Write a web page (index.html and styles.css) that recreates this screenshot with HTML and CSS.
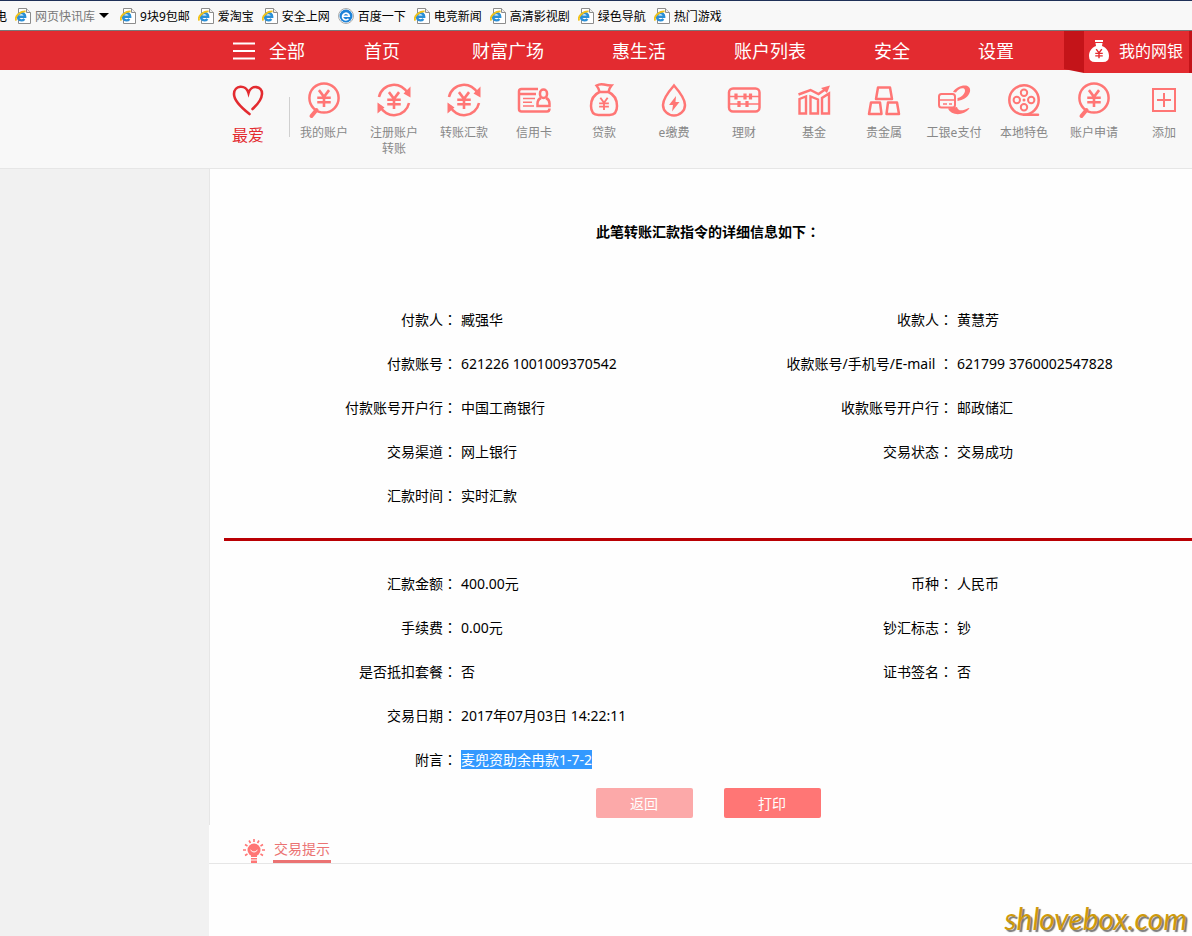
FILE: index.html
```html
<!DOCTYPE html>
<html lang="zh-CN">
  <head>
    <meta charset="UTF-8" />
    <meta name="viewport" content="width=device-width, initial-scale=1.0" />
    <title>转账汇款明细</title>
    <link rel="stylesheet" href="styles.css">
  </head>

  <body>
    <!-- shared icons -->
    <svg class="sprite" aria-hidden="true">
      <symbol id="ie-page" viewBox="0 0 16 16">
        <path d="M3.5.5h8l4 4v11h-12z" fill="#fff" stroke="#8c8c8c" />
        <path d="M11.5.5v4h4" fill="#eee" stroke="#8c8c8c" />
        <path d="M3 8.8h7.2A3.7 3.7 0 1 0 9.4 11" fill="none" stroke="#2b8fd6" stroke-width="2.4" />
        <path d="M1.4 12.6C-1 9 5 3 10.6 3.4" fill="none" stroke="#f2c21a" stroke-width="1.8" />
      </symbol>
      <symbol id="yen" viewBox="0 0 12 16">
        <path d="M1.5 1 6 7l4.5-6M6 7v9M0 7.8h12M0 11.8h12" fill="none" stroke="currentColor" stroke-width="2.3" />
      </symbol>
      <symbol id="search-yen" viewBox="0 0 40 40">
        <circle cx="20" cy="18" r="14.6" />
        <path d="M12.5 30 7.5 36" stroke-width="4" stroke-linecap="round" />
        <use href="#yen" x="13" y="9" width="14" height="18" />
      </symbol>
      <symbol id="transfer" viewBox="0 0 40 40">
        <path d="M5 17a15.3 15.3 0 0 1 29-3M35 23a15.3 15.3 0 0 1-29 3" />
        <path d="M36.5 6.5v11l-7-4zM3.5 33.5v-11l7 5z" fill="currentColor" stroke="none" />
        <use href="#yen" x="13" y="11" width="14" height="18" />
      </symbol>
      <symbol id="card" viewBox="0 0 40 40">
        <path d="M24 9H7.5Q5 9 5 11.5V29q0 2.5 2.5 2.500H33q2.500 0 2.500-3M5 14h17" />
        <path d="M9 18.500h12M9 22.200h9M9 26h11" stroke-width="1.6" />
        <rect x="26" y="9.5" width="7" height="8.5" rx="3.5" />
        <path d="M27 18q-3.500 1.500-3.500 5.500v2.500h12v-2.500q0-4-3.500-5.500" />
      </symbol>
      <symbol id="loan" viewBox="0 0 40 40">
        <path d="M15.500 12q-.5-3.500-3-6.500 3.500-2 7.500-1t7.500 1q-2.500 3-3 6.500zM15.500 12C9 15 7 21 7 26q0 9 7.500 9h11q7.500 0 7.500-9c0-5-2-11-8.500-14" />
        <use href="#yen" x="15" y="17" width="10" height="13" />
      </symbol>
      <symbol id="drop" viewBox="0 0 40 40">
        <path d="M20 5.500Q9 18 9 25a11 10.500 0 0 0 22 0Q31 18 20 5.500z" />
        <path d="m22 16-7 9h4l-1 6.500 7.500-9.500h-4z" fill="currentColor" stroke="none" />
      </symbol>
      <symbol id="abacus" viewBox="0 0 40 40">
        <rect x="5" y="8.5" width="30.5" height="23" rx="4" />
        <path d="M5 16.500h30M5 24h30" stroke-width="1.6" />
        <path d="M12 13.500v6M21 13.500v6M26.500 13.500v6M15 21v6M23 21v6" stroke-width="3.2" />
      </symbol>
      <symbol id="fund" viewBox="0 0 40 40">
        <path d="M5.500 33.500V19l6.500-2.500v17zM16.500 33.500v-17l7.500 3v14zM28 33.500V18l7-4.500v20z" stroke-width="2.4" />
        <path d="m4.500 14.500 12-4.500 8 4 8-5.500" />
        <path d="m36 5.500-9 2.500 6 5z" fill="currentColor" stroke="none" />
      </symbol>
      <symbol id="gold" viewBox="0 0 40 40">
        <path d="M14 7.500h12l2 11.500H12zM7 22.500h9L17.500 34H5zM24 22.500h9L35 34H22.500z" stroke-linejoin="round" />
      </symbol>
      <symbol id="epay" viewBox="0 0 40 40">
        <path d="M19 12C22 7 29 4.500 33.500 6 39.500 9 35 19.500 23.500 21v-3C29 17 33 11 30 8.500c-3-1-6 1-8 4zM14 28.500c3 7 15 8 21.500 0l-1-.5C28 31.500 24 31 23 27z" fill="currentColor" stroke="none" />
        <rect x="5" y="14" width="16" height="13.5" rx="2.5" stroke-width="2" />
        <path d="M5 20h16M9 24h4M15 24h3" stroke-width="1.5" />
      </symbol>
      <symbol id="film" viewBox="0 0 40 40">
        <circle cx="20" cy="20" r="14.7" />
        <g stroke-width="2">
          <circle cx="20" cy="12.8" r="3.2" />
          <circle cx="20" cy="27.2" r="3.2" />
          <circle cx="12.8" cy="20" r="3.2" />
          <circle cx="27.2" cy="20" r="3.2" />
        </g>
        <circle cx="20" cy="20" r="1.5" fill="currentColor" stroke="none" />
        <path d="M20 34.700h14" stroke-linecap="round" />
      </symbol>
      <symbol id="add" viewBox="0 0 40 40">
        <rect x="9" y="9" width="22" height="22" stroke-width="2" />
        <path d="M13 20h14M20 13v14" stroke-width="2" />
      </symbol>
    </svg>

    <!-- bookmarks -->
    <div class="bookmarks">
      <a href="#">电</a>
      <a href="#" class="muted"><svg><use href="#ie-page" /></svg>网页快讯库<span class="arrow"></span></a>
      <a href="#"><svg><use href="#ie-page" /></svg>9块9包邮</a>
      <a href="#"><svg><use href="#ie-page" /></svg>爱淘宝</a>
      <a href="#"><svg><use href="#ie-page" /></svg>安全上网</a>
      <a href="#">
        <svg viewBox="0 0 16 16">
          <circle cx="8" cy="8" r="7.5" fill="#fff" stroke="#aaa" />
          <circle cx="8" cy="8" r="6.5" fill="#1c82d8" />
          <path d="M4.500 8.300h6.800A3.400 3.400 0 1 0 10.500 10.800" fill="none" stroke="#fff" stroke-width="1.6" />
        </svg>百度一下</a>
      <a href="#"><svg><use href="#ie-page" /></svg>电竞新闻</a>
      <a href="#"><svg><use href="#ie-page" /></svg>高清影视剧</a>
      <a href="#"><svg><use href="#ie-page" /></svg>绿色导航</a>
      <a href="#"><svg><use href="#ie-page" /></svg>热门游戏</a>
    </div>

    <!-- main nav -->
    <nav class="main-nav">
      <a href="#" class="all">
        <svg viewBox="0 0 22 18"><path d="M0 1.500h22M0 9h22M0 16.500h22" stroke="#fff" stroke-width="2" /></svg>全部</a>
      <a href="#" class="home">首页</a>
      <a href="#">财富广场</a>
      <a href="#">惠生活</a>
      <a href="#">账户列表</a>
      <a href="#">安全</a>
      <a href="#">设置</a>
      <div class="my-bank">
        <svg class="fold" viewBox="0 0 20 42"><path d="M0 0h20v42L0 38z" fill="#c41419" /></svg>
        <a href="#">
          <svg class="bag" viewBox="0 0 20 22">
            <path d="M6 0h8v2H6zM6.500 3h7l-.5 3C18 8 20 12 20 16q0 6-6 6H6q-6 0-6-6c0-4 2-8 7-10z" fill="#fff" />
            <use href="#yen" x="6" y="8.5" width="8" height="10" />
          </svg>我的网银</a>
      </div>
    </nav>

    <!-- shortcuts -->
    <div class="shortcuts">
      <a href="#" class="favorite">
        <svg viewBox="0 0 40 40">
          <path d="M21.500 34Q6 22 6 14c0-9 12-10 14.500-1C23 4 34.500 6 34 14q-.5 7-9.500 15" fill="none" stroke="#e32b30" stroke-width="2.6" stroke-linecap="round" />
        </svg>
        最爱
      </a>
      <a href="#" class="shortcut"><svg><use href="#search-yen" /></svg>我的账户</a>
      <a href="#" class="shortcut"><svg><use href="#transfer" /></svg>注册账户<br>转账</a>
      <a href="#" class="shortcut"><svg><use href="#transfer" /></svg>转账汇款</a>
      <a href="#" class="shortcut"><svg><use href="#card" /></svg>信用卡</a>
      <a href="#" class="shortcut"><svg><use href="#loan" /></svg>贷款</a>
      <a href="#" class="shortcut"><svg><use href="#drop" /></svg>e缴费</a>
      <a href="#" class="shortcut"><svg><use href="#abacus" /></svg>理财</a>
      <a href="#" class="shortcut"><svg><use href="#fund" /></svg>基金</a>
      <a href="#" class="shortcut"><svg><use href="#gold" /></svg>贵金属</a>
      <a href="#" class="shortcut"><svg><use href="#epay" /></svg>工银e支付</a>
      <a href="#" class="shortcut"><svg><use href="#film" /></svg>本地特色</a>
      <a href="#" class="shortcut"><svg><use href="#search-yen" /></svg>账户申请</a>
      <a href="#" class="shortcut"><svg><use href="#add" /></svg>添加</a>
    </div>

    <div class="page">
      <main class="panel">
        <section class="detail">
          <h1>此笔转账汇款指令的详细信息如下<span class="colon">：</span></h1>

          <dl class="info">
            <dt>付款人<span class="colon">：</span></dt>
            <dd>臧强华</dd>
            <dt>收款人<span class="colon">：</span></dt>
            <dd>黄慧芳</dd>
            <dt>付款账号<span class="colon">：</span></dt>
            <dd>621226 1001009370542</dd>
            <dt>收款账号/手机号/E-mail <span class="colon">：</span></dt>
            <dd>621799 3760002547828</dd>
            <dt>付款账号开户行<span class="colon">：</span></dt>
            <dd>中国工商银行</dd>
            <dt>收款账号开户行<span class="colon">：</span></dt>
            <dd>邮政储汇</dd>
            <dt>交易渠道<span class="colon">：</span></dt>
            <dd>网上银行</dd>
            <dt>交易状态<span class="colon">：</span></dt>
            <dd>交易成功</dd>
            <dt>汇款时间<span class="colon">：</span></dt>
            <dd>实时汇款</dd>
          </dl>

          <hr>

          <dl class="info">
            <dt>汇款金额<span class="colon">：</span></dt>
            <dd>400.00元</dd>
            <dt>币种<span class="colon">：</span></dt>
            <dd>人民币</dd>
            <dt>手续费<span class="colon">：</span></dt>
            <dd>0.00元</dd>
            <dt>钞汇标志<span class="colon">：</span></dt>
            <dd>钞</dd>
            <dt>是否抵扣套餐<span class="colon">：</span></dt>
            <dd>否</dd>
            <dt>证书签名<span class="colon">：</span></dt>
            <dd>否</dd>
            <dt>交易日期<span class="colon">：</span></dt>
            <dd class="wide">2017年07月03日 14:22:11</dd>
            <dt>附言<span class="colon">：</span></dt>
            <dd class="wide"><mark>麦兜资助余冉款1-7-2</mark></dd>
          </dl>

          <div class="buttons">
            <button type="button" class="back">返回</button>
            <button type="button">打印</button>
          </div>
        </section>

        <div class="tips">
          <svg viewBox="0 0 22 24">
            <circle cx="11" cy="11" r="6.5" fill="#ff7675" />
            <path d="M8 15h6v9H8z" fill="#ff7675" />
            <path d="M7.500 11q3.500 4 7 0M7 18.500h8M7 21h8" fill="none" stroke="#fff" />
            <path d="M11 0v3M6 1.500l1.500 2.500M16 1.500 14.500 4M2 5.500l2.500 1.500M20 5.500 17.500 7M0 11h3M19 11h3M2 16.500 4.500 15M20 16.500 17.500 15" stroke="#ff7675" stroke-width="1.6" />
          </svg>
          <h2>交易提示</h2>
        </div>
      </main>
    </div>

    <div class="watermark">shlovebox.com</div>
  </body>
</html>
```

FILE: styles.css
```css
:root {
  --red: #e32b30;
  --dark-red: #c41419;
  --pink: #ff7675;
  --light-bg: #f8f8f8;
  --line: #e6e6e6;
}

* {
  margin: 0;
  padding: 0;
  box-sizing: border-box;
}

body {
  display: flex;
  flex-direction: column;
  min-height: 100vh;
  overflow-x: hidden;
  background-color: #f1f1f1;
  color: #000;
  font-family: "Noto Sans", "Noto Sans CJK SC", sans-serif;
  font-size: 14px;
}

a {
  color: inherit;
  text-decoration: none;
  white-space: nowrap;
}

.sprite {
  display: none;
}

/* full-width colon, centred in its square */
.colon {
  font-family: "Noto Sans CJK TC", sans-serif;
  font-feature-settings: "locl" 0;
  line-height: 1;
}

/* bookmarks */
.bookmarks {
  display: flex;
  align-items: center;
  gap: 8px;
  height: 31px;
  margin-left: -5px;
  border-top: 1px solid #1f3058;
  border-bottom: 1px solid #777;
  background-color: var(--light-bg);
  font-size: 12px;
}

.bookmarks a {
  display: flex;
  align-items: center;
  gap: 4px;
}

.bookmarks svg {
  width: 16px;
  height: 16px;
}

.bookmarks .muted {
  padding-right: 3px;
  color: #777;
}

.arrow {
  border: 5px solid transparent;
  border-top-color: #000;
  border-bottom-width: 0;
}

/* main nav */
.main-nav {
  display: flex;
  height: 39px;
  padding-left: 233px;
  background-color: var(--red);
  color: #fff;
  font-size: 18px;
  line-height: 40px;
}

.main-nav > a {
  padding: 0 34px;
}

.main-nav .all {
  display: flex;
  align-items: center;
  gap: 14px;
  padding: 0 25px 0 0;
}

.all svg {
  width: 22px;
  height: 18px;
}

.main-nav .home {
  padding-right: 38px;
}

/* hangs a little below the bar */
.my-bank {
  position: relative;
  display: flex;
  height: 42px;
  margin-left: auto;
  border-right: 3px solid var(--dark-red);
  font-size: 16px;
}

.fold {
  width: 20px;
  height: 42px;
}

.my-bank a {
  display: flex;
  align-items: center;
  gap: 10px;
  padding: 0 6px 2px 5px;
  background-color: var(--red);
}

.bag {
  width: 20px;
  height: 22px;
  color: var(--red);
}

/* shortcuts */
.shortcuts {
  display: flex;
  height: 99px;
  padding: 10px 0 0 208px;
  border-bottom: 1px solid var(--line);
  background-color: var(--light-bg);
}

.shortcuts svg {
  display: block;
  width: 40px;
  height: 40px;
  margin: 0 auto 5px;
}

.favorite {
  flex: none;
  width: 80px;
  color: var(--red);
  font-size: 16px;
  line-height: 20px;
  text-align: center;
}

.shortcut {
  flex: none;
  width: 70px;
  color: #888;
  font-size: 12px;
  line-height: 16px;
  text-align: center;
}

.favorite + .shortcut {
  margin-left: 1px;
  background: linear-gradient(#d0d0d0, #d0d0d0) no-repeat 0 17px / 1px 40px;
}

.shortcut svg {
  color: var(--pink);
  fill: none;
  stroke: var(--pink);
  stroke-width: 2.5;
}

/* content */
.page {
  display: flex;
  flex: 1;
  padding-left: 209px;
}

.panel {
  flex: 1;
  background-color: #fefefe;
}

.detail {
  padding: 41px 0 7px 14px;
  border-left: 1px solid var(--line);
}

h1 {
  margin-bottom: 44px;
  font-size: 14px;
  line-height: 44px;
  text-align: center;
}

.info {
  display: grid;
  grid-template-columns: 233fr 263fr 233fr 239fr;
  grid-auto-rows: 44px;
  line-height: 44px;
  white-space: nowrap;
}

.info dt {
  text-align: right;
}

.info dd {
  padding-left: 4px;
}

.info .wide {
  grid-column: span 3;
}

.info mark {
  background-color: #3399ff;
  color: #fff;
}

hr {
  height: 3px;
  margin: 20px 0 21px;
  border: none;
  background-color: #b90004;
}

.buttons {
  display: flex;
  justify-content: center;
  gap: 31px;
  padding-top: 6px;
}

button {
  width: 97px;
  height: 30px;
  border: none;
  border-radius: 2px;
  background-color: var(--pink);
  color: #fff;
  font-family: inherit;
  font-size: 14px;
  cursor: pointer;
}

.back {
  background-color: #fca9a9;
}

.tips {
  display: flex;
  align-items: flex-end;
  gap: 8px;
  height: 39px;
  padding-left: 34px;
  border-bottom: 1px solid var(--line);
}

.tips svg {
  width: 22px;
  height: 24px;
}

h2 {
  padding: 0 1px;
  border-bottom: 3px solid #eb7373;
  color: #eb7373;
  font-size: 14px;
  font-weight: 400;
  line-height: 22px;
}

/* sits over the page corner */
.watermark {
  position: absolute;
  right: 5px;
  bottom: 0;
  color: #cf9a0c;
  font-family: Lato, sans-serif;
  font-size: 30px;
  font-style: italic;
  line-height: 36px;
  text-shadow: 2px 2px 1px #777;
}
```
